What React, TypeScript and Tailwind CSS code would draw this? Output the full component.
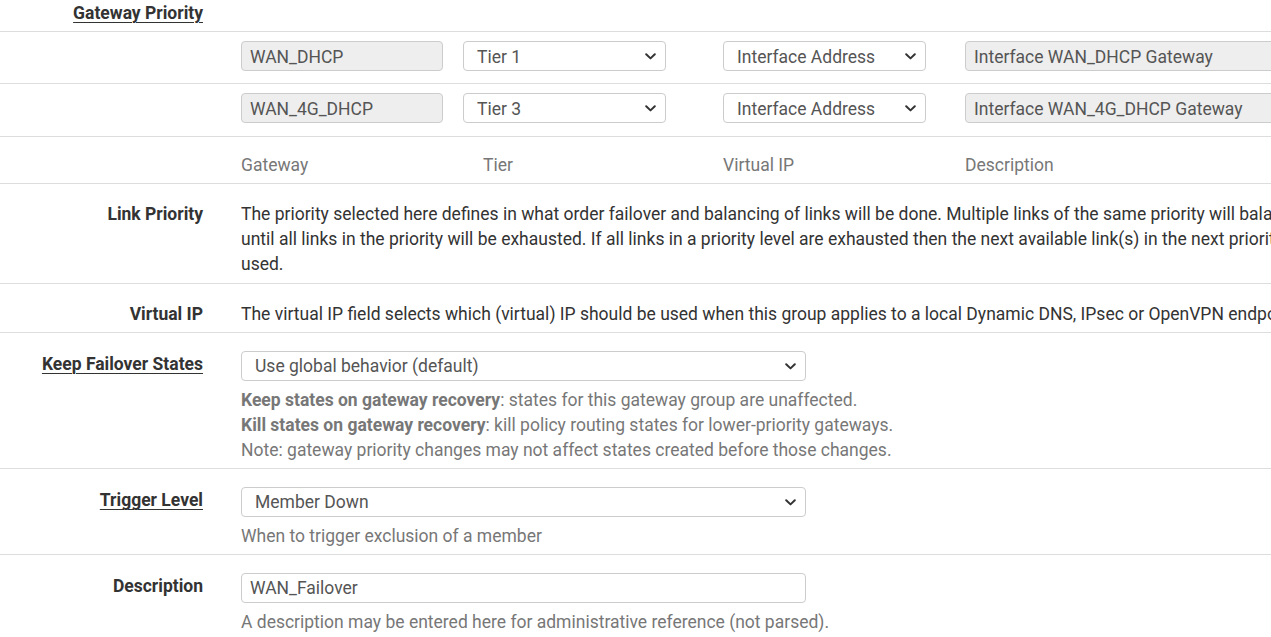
import React from "react";

const Chevron = () => (
  <svg width="11" height="7" viewBox="0 0 11 7" className="shrink-0">
    <path d="M1.2 1.2 L5.5 5.4 L9.8 1.2" fill="none" stroke="#333" strokeWidth="2" strokeLinecap="round" strokeLinejoin="round" />
  </svg>
);

const Select = ({ text, className, tp = "pt-[2px]" }: { text: string; className: string; tp?: string }) => (
  <div className={`h-[30px] rounded-[4px] border border-[#cccccc] bg-white flex items-center justify-between pl-[13px] pr-[9px] text-[#555] shrink-0 ${className}`}>
    <span className={`whitespace-nowrap ${tp}`}>{text}</span>
    <Chevron />
  </div>
);

const Input = ({ text, className, disabled, tp = "pt-[2px]" }: { text: string; className: string; disabled?: boolean; tp?: string }) => (
  <div className={`h-[30px] rounded-[4px] border border-[#cccccc] flex items-center pl-[8px] text-[#555] shrink-0 ${disabled ? "bg-[#eeeeee]" : "bg-white"} ${className}`}>
    <span className={`whitespace-nowrap ${tp}`}>{text}</span>
  </div>
);

const Label = ({ children, underline, pt }: { children: React.ReactNode; underline?: boolean; pt: string }) => (
  <div className={`w-[203px] shrink-0 text-right font-bold text-[#333] ${pt}`}>
    <span className={underline ? "underline underline-offset-[3px] decoration-1" : ""}>{children}</span>
  </div>
);

export default function App() {
  return (
    <div
      className="w-[1271px] h-[637px] overflow-hidden bg-white text-[17.5px] leading-[25px] text-[#333]"
      style={{ fontFamily: "Roboto, 'Liberation Sans', sans-serif" }}
    >
      {/* Header */}
      <div className="h-[32px] border-b border-[#dddddd] flex">
        <Label underline pt="pt-[1px]">Gateway Priority</Label>
      </div>

      {/* Gateway rows */}
      <div className="h-[52px] border-b border-[#dddddd] flex pt-[9px]">
        <div className="w-[241px] shrink-0" />
        <Input text="WAN_DHCP" disabled className="w-[202px]" />
        <Select text="Tier 1" className="w-[203px] ml-[20px]" />
        <Select text="Interface Address" className="w-[203px] ml-[57px]" />
        <Input text="Interface WAN_DHCP Gateway" disabled className="w-[340px] ml-[39px]" />
      </div>
      <div className="h-[53px] border-b border-[#dddddd] flex pt-[9px]">
        <div className="w-[241px] shrink-0" />
        <Input text="WAN_4G_DHCP" disabled className="w-[202px]" />
        <Select text="Tier 3" className="w-[203px] ml-[20px]" />
        <Select text="Interface Address" className="w-[203px] ml-[57px]" />
        <Input text="Interface WAN_4G_DHCP Gateway" disabled className="w-[340px] ml-[39px]" />
      </div>

      {/* Column headers */}
      <div className="h-[47px] border-b border-[#dddddd] flex pt-[16px] text-[#777]">
        <div className="w-[241px] shrink-0" />
        <div className="w-[242px] shrink-0">Gateway</div>
        <div className="w-[240px] shrink-0">Tier</div>
        <div className="w-[242px] shrink-0">Virtual IP</div>
        <div className="shrink-0">Description</div>
      </div>

      {/* Link Priority */}
      <div className="h-[100px] border-b border-[#dddddd] flex">
        <Label pt="pt-[18px]">Link Priority</Label>
        <div className="ml-[38px] pt-[18px] whitespace-nowrap text-[#333]">
          The priority selected here defines in what order failover and balancing of links will be done. Multiple links of the same priority will balance connections
          <br />
          until all links in the priority will be exhausted. If all links in a priority level are exhausted then the next available link(s) in the next priority level will be
          <br />
          used.
        </div>
      </div>

      {/* Virtual IP */}
      <div className="h-[49px] border-b border-[#dddddd] flex">
        <Label pt="pt-[18px]">Virtual IP</Label>
        <div className="ml-[38px] pt-[18px] whitespace-nowrap text-[#333]">
          The virtual IP field selects which (virtual) IP should be used when this group applies to a local Dynamic DNS, IPsec or OpenVPN endpoint.
        </div>
      </div>

      {/* Keep Failover States */}
      <div className="h-[136px] border-b border-[#dddddd] flex">
        <Label underline pt="pt-[19px]">Keep Failover States</Label>
        <div className="ml-[38px] pt-[18px] flex flex-col">
          <Select text="Use global behavior (default)" className="w-[565px]" tp="pt-0" />
          <div className="mt-[7px] text-[#777] whitespace-nowrap">
            <div>
              <span className="font-bold">Keep states on gateway recovery</span>: states for this gateway group are unaffected.
            </div>
            <div>
              <span className="font-bold">Kill states on gateway recovery</span>: kill policy routing states for lower-priority gateways.
            </div>
            <div>Note: gateway priority changes may not affect states created before those changes.</div>
          </div>
        </div>
      </div>

      {/* Trigger Level */}
      <div className="h-[86px] border-b border-[#dddddd] flex">
        <Label underline pt="pt-[19px]">Trigger Level</Label>
        <div className="ml-[38px] pt-[18px] flex flex-col">
          <Select text="Member Down" className="w-[565px]" tp="pt-0" />
          <div className="mt-[7px] text-[#777] whitespace-nowrap">When to trigger exclusion of a member</div>
        </div>
      </div>

      {/* Description */}
      <div className="flex">
        <Label pt="pt-[19px]">Description</Label>
        <div className="ml-[38px] pt-[18px] flex flex-col">
          <Input text="WAN_Failover" className="w-[565px]" tp="pt-0" />
          <div className="mt-[7px] text-[#777] whitespace-nowrap">
            A description may be entered here for administrative reference (not parsed).
          </div>
        </div>
      </div>
    </div>
  );
}
